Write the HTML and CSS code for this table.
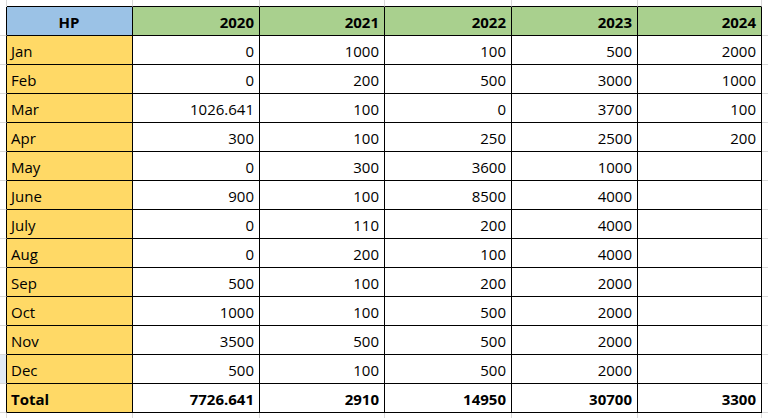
FILE: index.html
```html
<!DOCTYPE html>
<html lang="en">
<head>
<meta charset="utf-8">
<title>HP</title>
<link rel="stylesheet" href="styles.css">
</head>
<body>
<div class="sheet">
  <div class="tl"></div>
  <div class="tm"></div><div class="tm"></div><div class="tm"></div><div class="tm"></div><div class="tm"></div><div class="tm"></div>
  <div class="tr"></div>

  <div class="lm"></div>
  <div class="cell hp">HP</div>
  <div class="cell yr">2020</div><div class="cell yr">2021</div><div class="cell yr">2022</div><div class="cell yr">2023</div><div class="cell yr">2024</div>
  <div class="rm"></div>

  <div class="lm"></div><div class="cell mo">Jan</div>
  <div class="cell num">0</div><div class="cell num">1000</div><div class="cell num">100</div><div class="cell num">500</div><div class="cell num">2000</div>
  <div class="rm"></div>

  <div class="lm"></div><div class="cell mo">Feb</div>
  <div class="cell num">0</div><div class="cell num">200</div><div class="cell num">500</div><div class="cell num">3000</div><div class="cell num">1000</div>
  <div class="rm"></div>

  <div class="lm"></div><div class="cell mo">Mar</div>
  <div class="cell num">1026.641</div><div class="cell num">100</div><div class="cell num">0</div><div class="cell num">3700</div><div class="cell num">100</div>
  <div class="rm"></div>

  <div class="lm"></div><div class="cell mo">Apr</div>
  <div class="cell num">300</div><div class="cell num">100</div><div class="cell num">250</div><div class="cell num">2500</div><div class="cell num">200</div>
  <div class="rm"></div>

  <div class="lm"></div><div class="cell mo">May</div>
  <div class="cell num">0</div><div class="cell num">300</div><div class="cell num">3600</div><div class="cell num">1000</div><div class="cell num"></div>
  <div class="rm"></div>

  <div class="lm"></div><div class="cell mo">June</div>
  <div class="cell num">900</div><div class="cell num">100</div><div class="cell num">8500</div><div class="cell num">4000</div><div class="cell num"></div>
  <div class="rm"></div>

  <div class="lm"></div><div class="cell mo">July</div>
  <div class="cell num">0</div><div class="cell num">110</div><div class="cell num">200</div><div class="cell num">4000</div><div class="cell num"></div>
  <div class="rm"></div>

  <div class="lm"></div><div class="cell mo">Aug</div>
  <div class="cell num">0</div><div class="cell num">200</div><div class="cell num">100</div><div class="cell num">4000</div><div class="cell num"></div>
  <div class="rm"></div>

  <div class="lm"></div><div class="cell mo">Sep</div>
  <div class="cell num">500</div><div class="cell num">100</div><div class="cell num">200</div><div class="cell num">2000</div><div class="cell num"></div>
  <div class="rm"></div>

  <div class="lm"></div><div class="cell mo">Oct</div>
  <div class="cell num">1000</div><div class="cell num">100</div><div class="cell num">500</div><div class="cell num">2000</div><div class="cell num"></div>
  <div class="rm"></div>

  <div class="lm"></div><div class="cell mo">Nov</div>
  <div class="cell num">3500</div><div class="cell num">500</div><div class="cell num">500</div><div class="cell num">2000</div><div class="cell num"></div>
  <div class="rm"></div>

  <div class="lm lm-active"></div><div class="cell mo">Dec</div>
  <div class="cell num">500</div><div class="cell num">100</div><div class="cell num">500</div><div class="cell num">2000</div><div class="cell num"></div>
  <div class="rm"></div>

  <div class="lm"></div><div class="cell mo bold">Total</div>
  <div class="cell num bold">7726.641</div><div class="cell num bold">2910</div><div class="cell num bold">14950</div><div class="cell num bold">30700</div><div class="cell num bold">3300</div>
  <div class="rm"></div>

  <div class="bl"></div>
  <div class="bm"></div><div class="bm"></div><div class="bm"></div><div class="bm"></div><div class="bm"></div><div class="bm"></div>
  <div class="br"></div>
</div>
</body>
</html>
```
FILE: styles.css
```css
html, body {
  margin: 0;
  padding: 0;
  background: #ffffff;
}

body {
  width: 768px;
  height: 418px;
  overflow: hidden;
}

.sheet {
  display: grid;
  grid-template-columns: 7px 126px 127px 125px 127px 126px 124px 1fr;
  grid-template-rows: 7px repeat(14, 29px) 1fr;
  width: 768px;
  height: 418px;
  font-family: "Open Sans", "Liberation Sans", sans-serif;
  font-size: 15px;
  line-height: 20px;
  color: #000000;
}

.sheet > div {
  box-sizing: border-box;
  min-width: 0;
}

/* margins: faint spreadsheet gridlines around the bordered block */
.tl {
  border-right: 1px solid #d9d9d9;
}
.tm {
  border-right: 1px solid #d9d9d9;
  border-bottom: 1px solid #000000;
}
.lm {
  border-right: 1px solid #000000;
  border-bottom: 1px solid #d9d9d9;
}
.lm-active {
  background: #e1eaf6;
}
.rm {
  border-bottom: 1px solid #d9d9d9;
}
.bl,
.bm {
  border-right: 1px solid #d9d9d9;
}

/* bordered cells */
.cell {
  display: flex;
  align-items: flex-end;
  padding: 0 5px 3px 4px;
  border-right: 1px solid #000000;
  border-bottom: 1px solid #000000;
  white-space: nowrap;
  overflow: hidden;
}

.hp {
  justify-content: center;
  background: #9bc2e6;
  font-weight: 700;
}

.yr {
  justify-content: flex-end;
  background: #a9d08e;
  font-weight: 700;
}

.mo {
  justify-content: flex-start;
  background: #ffd966;
}

.num {
  justify-content: flex-end;
  background: #ffffff;
}

.bold {
  font-weight: 700;
}
```
